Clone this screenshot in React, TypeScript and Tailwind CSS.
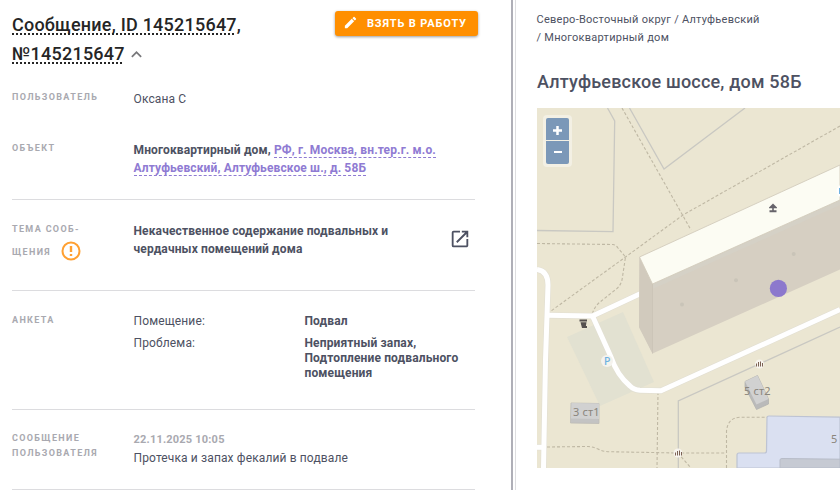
import type { ReactNode } from 'react'
import { MdEdit, MdKeyboardArrowUp, MdOpenInNew } from 'react-icons/md'

type RowProps = {
  label: ReactNode
  children: ReactNode
  className: string
}

const Row = ({ label, children, className }: RowProps) => (
  <div className={`flex ${className}`}>
    <div className="w-[121.5px] shrink-0 pt-px text-[9px] leading-[15px] font-bold tracking-[1.35px] text-[#a9a9b0] uppercase">
      {label}
    </div>
    <div className="min-w-0 flex-1">{children}</div>
  </div>
)

const MapView = () => (
  <svg viewBox="537 108 303 360" className="block h-[360px] w-[303px]" fill="none">
    <rect x="537" y="108" width="303" height="360" fill="#ebe6d2" />
    <path d="M567 337L623 312L654 382L600 406Z" fill="#e2e1d1" />

    <g stroke="#c9c8c2" strokeWidth="1.3">
      <path d="M607.5 108L614.7 121L613 231.7L537 230.5" />
      <path d="M629.5 108L664 169L745 108" />
      <path d="M840 327L678.3 401V468" />
    </g>

    <g stroke="#bfb8a4" strokeWidth="1.1" strokeDasharray="3 2">
      <path d="M622 108L691 230" />
      <path d="M840 126L683 215L625.5 257L551 311" />
      <path d="M537 243.5L613 244.5Q616 245 618 248L625.5 257L622 280Q620 287 615 290L600 302Q594 307 592 315" />
      <path d="M547 447L588 446.5Q592 446.500 598 449Q603 451.500 608 451.700L678 453L726 453" />
      <path d="M658 392L657 468" />
      <path d="M726.500 468V431Q728 417.500 740 417.300H767" />
      <path d="M678 453L691 468" />
    </g>

    {[
      { stroke: '#e2dfd3', width: 6.2 },
      { stroke: '#ffffff', width: 5 },
    ].map(({ stroke, width }) => (
      <g key={stroke} stroke={stroke} strokeWidth={width} strokeLinejoin="round">
        <path d="M537 269.500Q548 271 548 285L547 316L545.500 360L543.500 468" />
        <path d="M547 315.300L592.500 316L645 291.500" />
        <path d="M592.500 316L611 357Q617 375 630 386Q634 390 640 390.300L661 390.700L840 309.500" />
        <path d="M537 447.300H545" />
      </g>
    ))}

    <path d="M639.500 257L652.500 284L840 200V269.500L652.500 353.500L639 327Z" fill="#d6cfc2" />
    <path d="M639.500 257L652.500 284V353.500L639 327Z" fill="#d1cabd" />
    <path d="M652.500 284L840 200V205L652.500 289Z" fill="#d5d1c6" />
    <path d="M652.500 284V353.500" stroke="#ccc5b8" strokeWidth="1" />
    <path d="M639.500 257L840 165V200L652.500 284Z" fill="#fcfcf3" stroke="#d2ccbc" strokeWidth="0.9" />
    <g fill="#c9c4b8">
      <circle cx="682" cy="304.500" r="2" />
      <circle cx="736" cy="280.300" r="2" />
      <circle cx="793.700" cy="254" r="2" />
    </g>

    <path d="M767 417.500Q767 416 769 416L840 417.200V468H737V455Q737 453 739 453H764.500Q766.500 453 766.500 451Z" fill="#dae0f1" stroke="#bdc3d3" strokeWidth="1.2" />
    <path d="M780 468V460Q780 458.500 782 458.500L840 459.200V468Z" fill="#c6cad3" stroke="#b7bcc8" />

    <path d="M571 403L599 403.500V423.500L570.500 423Z" fill="#c3c3c3" stroke="#bdbbb6" strokeWidth="0.8" />
    <path d="M571.500 403L599 403.500V419L571 418.500Z" fill="#d1d1d1" />
    <path d="M745 381.500L757.500 375.500L768.500 399V404L756.500 409.500L745 387Z" fill="#bababa" stroke="#b3b3b0" strokeWidth="0.8" />
    <path d="M745 381.500L757.500 375.500L768.500 399L756.500 404.500Z" fill="#d1d1d1" />

    <g fill="#8a857c" className="font-['Noto_Sans',sans-serif] text-[11px]">
      <text x="573" y="416">3 ст1</text>
      <text x="744" y="395.300">5 ст2</text>
      <text x="831" y="443">5</text>
    </g>

    <circle cx="607" cy="361" r="6" fill="#f5f3ee" />
    <text x="604" y="364.500" fill="#6fb2e0" className="font-['Noto_Sans',sans-serif] text-[10.5px] font-medium">P</text>
    <circle cx="843" cy="191" r="6.500" fill="#ffffff" />
    <rect x="839" y="188" width="1" height="6" fill="#6fb2e0" />

    {/* pavilion */}
    <path d="M769 207.500L773 203.500L777 207.500V208.300H773.800V210.300H776.500V212.300H769.500V210.300H772.200V208.300H769Z" fill="#66636a" />
    {/* waste bin */}
    <path d="M579.500 319.500H587V321.500H579.500ZM580.500 322.300H586.500L585.500 328H582ZM584 326H587V328H584Z" fill="#55504f" />

    <g stroke="#7b6154" strokeWidth="1">
      <circle cx="759.500" cy="364" r="4.500" fill="#f7f4ee" stroke="none" />
      <path d="M756.500 363.500V366.500M758.500 362V366.500M760.500 361.500V366.500M762.500 363V366.500" />
      <circle cx="678" cy="453" r="4.500" fill="#f7f4ee" stroke="none" />
      <path d="M675.500 452.500V455.500M677.500 451V455.500M679.500 450.500V455.500M681.500 452V455.500" />
    </g>

    <circle cx="778.400" cy="288.400" r="8.600" fill="#8c78cd" />
  </svg>
)

const linkClass = 'border-b border-dashed border-[#8f7bd3] text-[#8f7bd3]'
const titleClass = 'underline decoration-dotted decoration-[2px] underline-offset-[2px] [text-decoration-skip-ink:none]'

const App = () => {
  return (
    <div className="flex h-[490px] w-[840px] overflow-hidden bg-white font-[Roboto,sans-serif] text-[12px] tracking-[0.13px] text-[#4d5162]">
      <section className="w-[511px] shrink-0 pl-3">
        <header className="flex h-[80px] w-[466px] items-start justify-between">
          <h1 className="pt-[10px] text-[18px] leading-[29px] font-medium tracking-[0.23px] whitespace-nowrap text-[#252525]">
            <span className={titleClass}>Сообщение, ID 145215647</span>,<br />
            <span className={titleClass}>№145215647</span>
            <MdKeyboardArrowUp className="ml-[1.500px] inline-block size-[21px] align-[-5px] text-[#77777a]" />
          </h1>
          <button className="mt-[11px] flex h-[25px] w-[143px] items-center rounded-[3px] bg-[#ff8f00] pl-[8px] text-[11px] font-bold tracking-[0.85px] whitespace-nowrap text-white shadow-[0_1px_3px_rgba(0,0,0,0.4)]">
            <MdEdit className="mr-[9px] mb-[2px] size-[15px] shrink-0" />
            <span className="pt-px">ВЗЯТЬ В РАБОТУ</span>
          </button>
        </header>

        <div className="w-[463px]">
          <Row label="Пользователь" className="h-[51px] pt-[9px]">
            <p className="pt-[1px] leading-[18px]">Оксана С</p>
          </Row>
          <Row label="Объект" className="h-[69px] border-b border-[#dcdcdf] pt-[9px]">
            <p className="pt-[1px] leading-[18px] font-bold whitespace-nowrap">
              Многоквартирный дом,{' '}
              <span className={linkClass}>
                РФ, г. Москва, вн.тер.г. м.о.
                <br />
                Алтуфьевский, Алтуфьевское ш., д. 58Б
              </span>
            </p>
          </Row>
          <Row
            className="h-[91px] border-b border-[#dcdcdf] pt-[21px]"
            label={
              <>
                <div>Тема сооб-</div>
                <div className="flex h-[30px] items-center">
                  щения
                  <svg viewBox="0 0 20 20" className="mb-[2px] ml-[10px] size-[20px]" fill="none" stroke="#ffa032" strokeWidth="2">
                    <circle cx="10" cy="10" r="8.500" />
                    <path d="M10 5V11M10 13V15" strokeWidth="2.400" />
                  </svg>
                </div>
              </>
            }
          >
            <div className="flex justify-between">
              <p className="w-[280px] pt-[1px] leading-[18px] font-bold">
                Некачественное содержание подвальных и чердачных помещений дома
              </p>
              <MdOpenInNew className="mt-[7px] mr-[4.500px] size-[22px]" />
            </div>
          </Row>
          <Row label="Анкета" className="h-[119px] border-b border-[#dcdcdf] pt-[21px]">
            <dl className="grid grid-cols-[171px_1fr] gap-y-[7px] pt-[2px] leading-[15px]">
              <dt>Помещение:</dt>
              <dd className="font-bold">Подвал</dd>
              <dt>Проблема:</dt>
              <dd className="font-bold">Неприятный запах, Подтопление подвального помещения</dd>
            </dl>
          </Row>
          <Row
            label={<>Сообщение<br />пользователя</>}
            className="h-[80px] border-b border-[#dcdcdf] pt-[20px]"
          >
            <p className="pt-[1px] text-[11px] leading-[18px] font-bold tracking-[0.2px] text-[#a9a9b0]">22.11.2025 10:05</p>
            <p className="leading-[18px]">Протечка и запах фекалий в подвале</p>
          </Row>
        </div>
      </section>

      <div className="w-[5px] shrink-0 border-r border-l-2 border-r-[#dedee0] border-l-[#afafb7]" />

      <aside className="min-w-0 flex-1 pl-[21px]">
        <nav className="-ml-[0.5px] pt-[11px] text-[11px] leading-[18px] tracking-[0.26px]">
          Северо-Восточный округ / Алтуфьевский
          <br />/ Многоквартирный дом
        </nav>
        <h2 className="mt-[20px] mb-[11px] text-[18px] leading-[30px] font-medium tracking-[0.2px] whitespace-nowrap">
          Алтуфьевское шоссе, дом 58Б
        </h2>
        <div className="relative">
          <MapView />
          <div className="absolute top-[7px] left-[6px] flex flex-col gap-px rounded-[4px] bg-white/40 p-[3px]">
            <button className="flex h-[22px] w-[23px] items-center justify-center rounded-t-[2px] bg-[#7b98b8] text-white">
              <svg viewBox="0 0 9 9" className="mt-[2px] size-[9px]" stroke="currentColor" strokeWidth="2.500">
                <path d="M0 4.500H9M4.500 0V9" />
              </svg>
            </button>
            <button className="flex h-[23px] w-[23px] items-center justify-center rounded-b-[2px] bg-[#7b98b8] text-white">
              <svg viewBox="0 0 8 2" className="mb-px h-[2px] w-[8px]" fill="currentColor">
                <rect width="8" height="2" />
              </svg>
            </button>
          </div>
        </div>
      </aside>
    </div>
  )
}

export default App
